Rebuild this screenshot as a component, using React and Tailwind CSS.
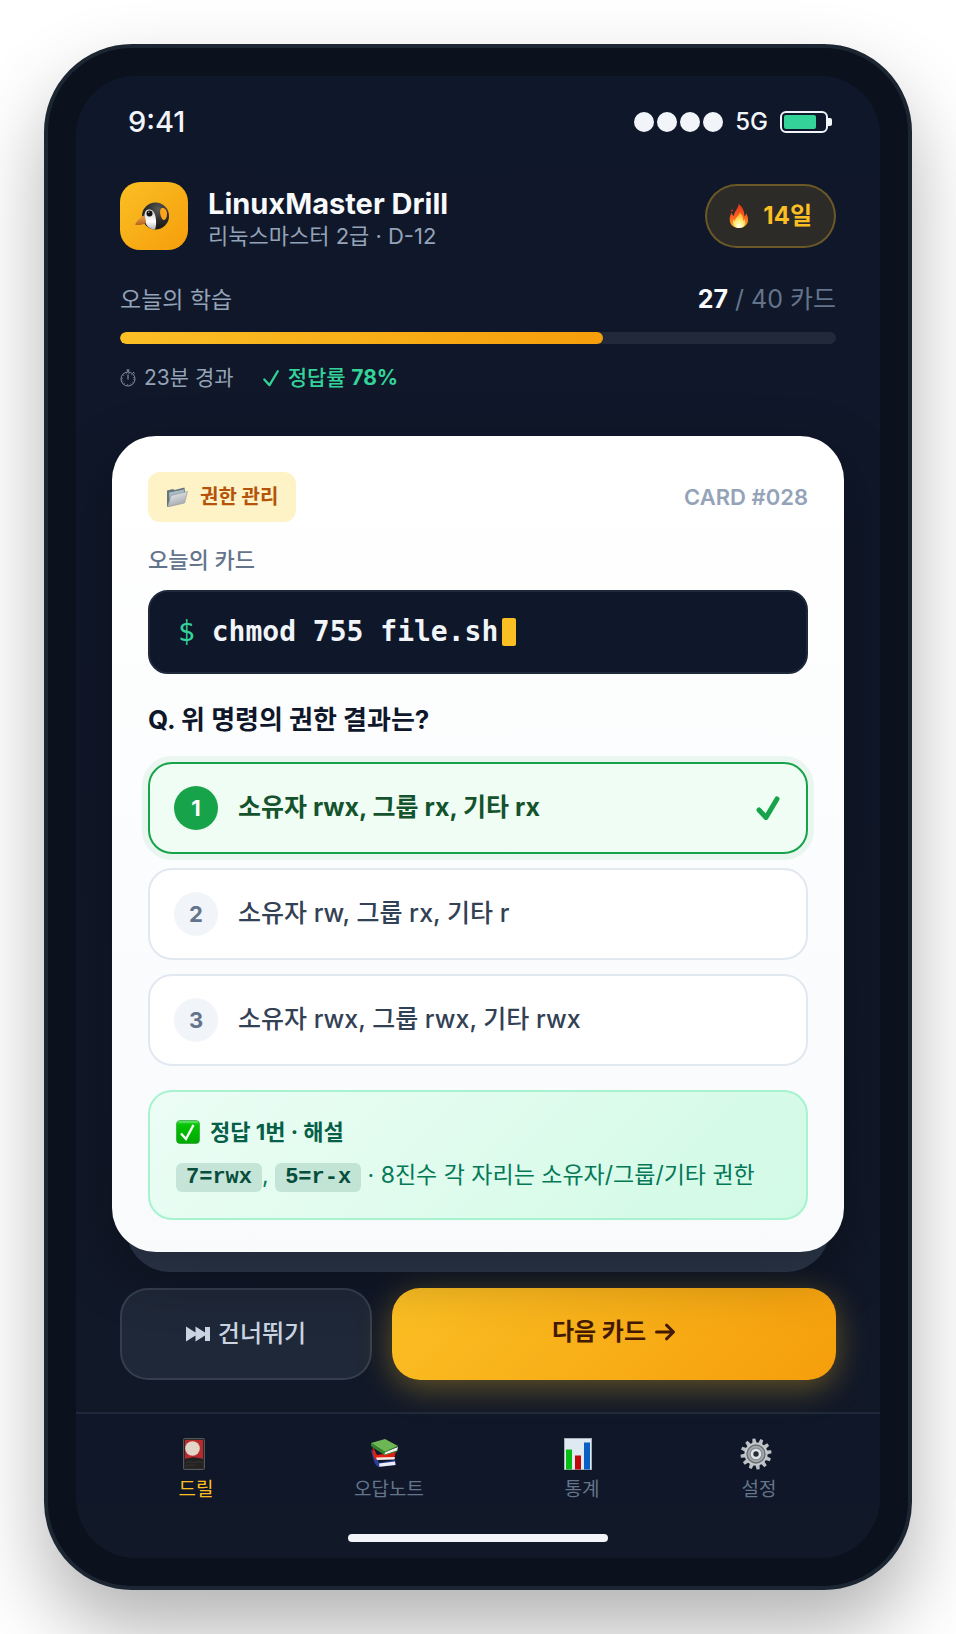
import { useState } from 'react'
import clsx from 'clsx'

const options = [
	{ id: 1, text: '소유자 rwx, 그룹 rx, 기타 rx' },
	{ id: 2, text: '소유자 rw, 그룹 rx, 기타 r' },
	{ id: 3, text: '소유자 rwx, 그룹 rwx, 기타 rwx' }
]

const correctId = 1

const PenguinIcon = () => (
	<svg viewBox="0 0 36 30" className="mr-1 h-[30px] w-9" aria-hidden="true">
		<defs>
			<radialGradient id="penguinHead" cx="0.6" cy="0.25" r="0.8">
				<stop offset="0" stopColor="#5c5b58" />
				<stop offset="0.5" stopColor="#2f2e2c" />
				<stop offset="1" stopColor="#151515" />
			</radialGradient>
			<linearGradient id="penguinFace" x1="0" y1="0" x2="0" y2="1">
				<stop offset="0" stopColor="#c9c9c9" />
				<stop offset="0.6" stopColor="#ffffff" />
				<stop offset="1" stopColor="#b5b5b5" />
			</linearGradient>
			<linearGradient id="penguinBeak" x1="0" y1="0" x2="0" y2="1">
				<stop offset="0" stopColor="#f0a24a" />
				<stop offset="1" stopColor="#b5651d" />
			</linearGradient>
		</defs>
		<circle cx="21.5" cy="15" r="13.5" fill="url(#penguinHead)" />
		<path d="M10.500 17C10 11 12 8.500 15 8.500s5.500 2 6.500 7 .8 9.500-.500 13C14.500 28 11 24 10.500 17z" fill="url(#penguinFace)" />
		<path d="M27 7.500c3.500-1.500 6 1.500 6 5.500s-1.500 6-3.500 6-5-9-2.500-11.500z" fill="#fba31c" />
		<path d="M9.500 14.500c-3 2-7 5.500-8.500 9 3 1.500 8 0 11-1.500 0-3-.5-6-2.500-7.500z" fill="url(#penguinBeak)" />
		<circle cx="15.500" cy="12.500" r="3.800" fill="#ddd" />
		<circle cx="15.500" cy="12.500" r="3" fill="#111" />
		<circle cx="14.700" cy="11.300" r="0.800" fill="#999" />
	</svg>
)

const FireIcon = () => (
	<svg viewBox="0 0 20 24" className="h-6 w-5" aria-hidden="true">
		<defs>
			<linearGradient id="fireOuter" x1="0" y1="0" x2="0" y2="1">
				<stop offset="0" stopColor="#e8321a" />
				<stop offset="0.6" stopColor="#fb6a1e" />
				<stop offset="1" stopColor="#ffb52b" />
			</linearGradient>
			<radialGradient id="fireInner" cx="0.5" cy="0.9" r="0.8">
				<stop offset="0" stopColor="#ffffff" />
				<stop offset="0.45" stopColor="#fff07a" />
				<stop offset="1" stopColor="#ffb02e" />
			</radialGradient>
		</defs>
		<path
			d="M9.500 0c.3 3-2 5-3.500 8C5 10 5.200 11 4.800 12 3.500 11 3 10 2.800 8.500 1.200 11 .4 13.500.8 17 1.400 21.500 5.500 24 10 24s8.500-2.800 9-7c.4-3.200-.8-6-2-8-.1 1.700-.6 2.800-1.500 3.500C15.300 7 13.500 2.500 9.500 0z"
			fill="url(#fireOuter)"
		/>
		<circle cx="3" cy="6.500" r="0.900" fill="#e8321a" />
		<path
			d="M10.500 8.500c.3 3-4.200 5-4.700 8.500-.4-.6-.8-1.200-1-2-1.800 3.600-.7 9 5.200 9s7.300-5 5.500-9c-.4 1-.8 1.400-1.300 1.800.1-3.800-1.200-6.700-3.700-8.300z"
			fill="url(#fireInner)"
		/>
	</svg>
)

const StopwatchIcon = () => (
	<svg viewBox="0 0 16 18" className="h-[18px] w-4" fill="none" stroke="currentColor" aria-hidden="true">
		<circle cx="8" cy="10" r="7" strokeWidth="0.900" />
		<circle cx="8" cy="10" r="5.500" strokeWidth="1" strokeDasharray="0.700 2.180" />
		<path d="M8 5.500v5M6.500 1h3M8 1v2M13 3l1.500 1.500" strokeWidth="1" />
	</svg>
)

const CheckIcon = ({ className, strokeWidth }) => (
	<svg
		viewBox="0 0 24 24"
		className={className}
		fill="none"
		stroke="currentColor"
		strokeWidth={strokeWidth}
		strokeLinecap="round"
		strokeLinejoin="round"
		aria-hidden="true"
	>
		<path d="M3 14l7 7.500L21 3" />
	</svg>
)

const FolderIcon = () => (
	<svg viewBox="0 0 22 20" className="h-5 w-[22px]" aria-hidden="true">
		<defs>
			<linearGradient id="folderFront" x1="0" y1="0" x2="0.400" y2="1">
				<stop offset="0" stopColor="#f0f1f2" />
				<stop offset="1" stopColor="#a3a9af" />
			</linearGradient>
		</defs>
		<path d="M1 3.500L7 2l1.500 1L18.500.5l.5 5L4 19 1 20z" fill="#66747c" />
		<path d="M3 5.500l15-3 .3 3.500L3.500 13z" fill="#a9bcc4" />
		<path d="M5 8.500L21.500 4.500 18.500 16 1.500 20z" fill="url(#folderFront)" stroke="#8b949a" strokeWidth="0.600" />
	</svg>
)

const CheckBoxEmoji = () => (
	<svg viewBox="0 0 24 24" className="size-6" aria-hidden="true">
		<defs>
			<linearGradient id="checkBox" x1="0" y1="0" x2="0" y2="1">
				<stop offset="0" stopColor="#3ed648" />
				<stop offset="0.200" stopColor="#04c404" />
				<stop offset="1" stopColor="#00a800" />
			</linearGradient>
		</defs>
		<rect x="0.500" y="0.500" width="23" height="23" rx="3.500" fill="url(#checkBox)" stroke="#1f9a2a" strokeWidth="0.600" />
		<path d="M2.500 2h19" stroke="#8df08d" strokeWidth="0.800" strokeLinecap="round" />
		<path d="M5 13.500l5 5.500L17.500 5" fill="none" stroke="#fff" strokeWidth="2.400" />
	</svg>
)

const SkipIcon = () => (
	<svg viewBox="0 0 24 16" className="h-4 w-6" fill="currentColor" aria-hidden="true">
		<path d="M0 0.500l9.500 6V0.500l9.500 6V1h5v14h-5V9.500l-9.500 6v-6L0 15.500z" />
	</svg>
)

const ArrowIcon = () => (
	<svg
		viewBox="0 0 22 18"
		className="h-[18px] w-[22px]"
		fill="none"
		stroke="currentColor"
		strokeWidth="3"
		strokeLinecap="round"
		strokeLinejoin="round"
		aria-hidden="true"
	>
		<path d="M2.500 9H19M12.500 2.200L19.500 9l-7 6.800" />
	</svg>
)

const HanafudaIcon = () => (
	<svg viewBox="-4 0 32 32" className="mr-1 size-8" aria-hidden="true">
		<rect x="1.500" y="0.500" width="21" height="31" rx="1" fill="#2b2b2b" stroke="#55565a" />
		<path d="M3 2h18v19c-6-2-12-2-18 0z" fill="#b92a2c" />
		<path d="M3 21c6-2 12-2 18 0v9H3z" fill="#242322" />
		<path d="M4 25c4-3 7 1 10-1 3-1 5 0 7 1M4 28c4-2 6 0 9-1" fill="none" stroke="#3b3936" strokeWidth="0.800" />
		<circle cx="10.500" cy="10.500" r="7.300" fill="#e2d6c8" />
	</svg>
)

const BooksIcon = () => (
	<svg viewBox="1 0 32 32" className="mr-1 size-8" aria-hidden="true">
		<path d="M1 12l4 2 4 11 16-3 1 5-17 2c-4-1-5-5-8-17z" fill="#27409b" />
		<path d="M9 25.500l16-2 .5 3.500-16 1.800z" fill="#ececf2" />
		<path d="M3 9l4 8 19-3-2 6-18 2c-3-3-4-8-3-13z" fill="#e01f12" />
		<path d="M6 19.500l19-.5-.5 2.500L7 22z" fill="#f5e9e6" />
		<path d="M1 5L15 1l13 7-13 6z" fill="#6cb656" />
		<path d="M1 5l14 9-.5 3L2 9c-1.200-1-1.500-3-1-4z" fill="#35832c" />
		<path d="M15 14l13-5-1 4-12.500 4z" fill="#f4f4f4" />
		<path d="M28 8l-13 6.200M28 12.500L14.500 17" stroke="#35832c" strokeWidth="0.900" fill="none" />
	</svg>
)

const ChartIcon = () => (
	<svg viewBox="0 0 32 32" className="mr-1 size-8" aria-hidden="true">
		<rect x="0.500" y="0.500" width="27" height="31" fill="#dfe9f1" stroke="#a9b1b8" />
		<rect x="2" y="11.500" width="6" height="20" fill="#07bd15" />
		<rect x="11" y="17.500" width="6" height="14" fill="#c00808" />
		<rect x="20" y="4.500" width="6" height="27" fill="#0a5fc4" />
	</svg>
)

const teeth = [0, 30, 60, 90, 120, 150, 180, 210, 240, 270, 300, 330]

const GearIcon = () => (
	<svg viewBox="0 0 32 32" className="mr-1.5 size-8" aria-hidden="true">
		{teeth.map((angle) => (
			<path key={angle} d="M13.800 6l.7-5.500h3l.7 5.500z" fill="#bcc0c4" transform={`rotate(${angle - 8} 16 16)`} />
		))}
		<circle cx="16" cy="16" r="11.500" fill="#c6cacd" />
		<circle cx="16" cy="16" r="9" fill="#a3a9ad" stroke="#687074" strokeWidth="1.400" />
		<circle cx="16" cy="16" r="6.500" fill="#858d92" />
		<circle cx="16" cy="16" r="4" fill="#252c33" stroke="#dfe4e8" strokeWidth="2.600" />
	</svg>
)

const navItems = [
	{ label: '드릴', icon: HanafudaIcon },
	{ label: '오답노트', icon: BooksIcon },
	{ label: '통계', icon: ChartIcon },
	{ label: '설정', icon: GearIcon }
]

const StatusBar = () => (
	<div className="flex h-23 items-center justify-between pr-12 pl-13 text-[#f1f5f9]">
		<span className="text-[29px] leading-8 font-medium">9:41</span>
		<div className="flex items-center">
			<div className="flex gap-[3px]">
				<span className="size-5 rounded-full bg-[#f1f5f9]" />
				<span className="size-5 rounded-full bg-[#f1f5f9]" />
				<span className="size-5 rounded-full bg-[#f1f5f9]" />
				<span className="size-5 rounded-full bg-[#f1f5f9]" />
			</div>
			<span className="mx-3 text-[24px] leading-8 font-medium">5G</span>
			<div className="h-[22px] w-12 rounded-md border-2 border-[#f1f5f9] p-0.5">
				<div className="h-full w-4/5 rounded-xs bg-[#34d399]" />
			</div>
			<div className="h-2 w-1 rounded-r-xs bg-[#f1f5f9]" />
		</div>
	</div>
)

const Progress = ({ done, total }) => (
	<section className="mt-8 px-11">
		<div className="flex h-9 items-center justify-between">
			<span className="text-[23px] text-[#94a3b8]">오늘의 학습</span>
			<span className="text-[25px] text-[#64748b]">
				<b className="font-bold text-[#f8fafc]">{done}</b> / {total} 카드
			</span>
		</div>
		<div className="mt-3.5 h-3 overflow-hidden rounded-md bg-white/8">
			<div
				className="h-full rounded-md bg-[linear-gradient(90deg,#fbbf24,#f59e0b)]"
				style={{ width: `${(done / total) * 100}%` }}
			/>
		</div>
		<div className="mt-4 flex h-9 items-center gap-7 text-[21px]">
			<span className="flex items-center gap-2 text-[#94a3b8]">
				<StopwatchIcon />
				23분 경과
			</span>
			<span className="flex items-center gap-2 text-[#34d399]">
				<CheckIcon className="size-[18px]" strokeWidth={3} />
				<span className="font-medium">
					정답률 <b className="font-bold">78%</b>
				</span>
			</span>
		</div>
	</section>
)

const Option = ({ option, selected, onSelect }) => (
	<label
		className={clsx(
			'relative flex h-23 cursor-pointer items-center gap-5 rounded-3xl border-2 px-6 text-[25px]',
			selected
				? 'border-[#16a34a] bg-[#f0fdf4] font-bold text-[#14532d] ring-6 ring-[#16a34a]/8'
				: 'border-[#e2e8f0] bg-white font-medium text-[#334155]'
		)}
	>
		<input type="radio" name="answer" className="sr-only" checked={selected} onChange={onSelect} />
		<span
			className={clsx(
				'flex size-11 items-center justify-center rounded-full text-[22px] font-bold',
				selected ? 'bg-[#16a34a] text-white' : 'bg-[#f1f5f9] text-[#64748b]'
			)}
		>
			{option.id}
		</span>
		<span className="grow">{option.text}</span>
		{selected && <CheckIcon className="mr-0.5 size-6 text-[#16a34a]" strokeWidth={5} />}
	</label>
)

const Code = ({ children }) => (
	<code className="rounded-md bg-[#065f46]/15 px-2.5 py-0.5 font-['Liberation_Mono',monospace] text-[22px] leading-none font-bold text-[#064e3b]">
		{children}
	</code>
)

const App = () => {
	const [selectedId, setSelectedId] = useState(correctId)
	const [activeTab, setActiveTab] = useState(0)

	return (
		<div className="min-h-screen overflow-hidden bg-white p-11 font-[Inter,'Noto_Sans_CJK_KR',sans-serif]">
			<div className="rounded-[88px] border-4 border-[#1c2633] bg-[#0b121e] p-7 shadow-[0_40px_80px_rgba(0,0,0,0.3)]">
				<div className="overflow-hidden rounded-[60px] bg-[linear-gradient(180deg,#0f172a,#111827)]">
					<StatusBar />
					<header className="mt-3.5 flex items-center px-11">
						<div className="flex size-17 items-center justify-center rounded-[20px] bg-[linear-gradient(135deg,#fbbf24,#f59e0b)]">
							<PenguinIcon />
						</div>
						<div className="ml-5 grow pt-1">
							<h1 className="text-[29px] leading-9 font-bold text-[#f8fafc]">LinuxMaster Drill</h1>
							<p className="text-[22px] leading-7 text-[#94a3b8]">리눅스마스터 2급 · D-12</p>
						</div>
						<div className="flex h-16 items-center gap-3.5 rounded-full border-2 border-[#fbbf24]/30 bg-[#fbbf24]/12 px-[22px] text-[24px] font-bold text-[#fbbf24]">
							<FireIcon />
							14일
						</div>
					</header>
					<Progress done={27} total={40} />

					<main className="relative z-10 mx-9 mt-10">
						<div className="absolute inset-x-3.5 top-5 -bottom-5 rounded-[44px] bg-[#2c384b]" />
						<div className="relative rounded-[44px] bg-[linear-gradient(180deg,#ffffff,#f8fafc)] px-9 pt-9 pb-8 shadow-[0_20px_60px_rgba(0,0,0,0.3)]">
							<div className="flex items-center justify-between">
								<span className="flex h-[50px] items-center gap-3 rounded-xl bg-[#fef3c7] px-[18px] text-[20px] font-bold text-[#b45309]">
									<FolderIcon />
									권한 관리
								</span>
								<span className="text-[22px] font-semibold text-[#94a3b8]">CARD #028</span>
							</div>
							<p className="mt-6 text-[22px] leading-7 font-medium text-[#64748b]">오늘의 카드</p>
							<div className="mt-4 flex h-21 items-center rounded-[20px] border-2 border-[#1e293b] bg-[#0f172a] px-7 font-['DejaVu_Sans_Mono',monospace] text-[28px] font-bold whitespace-pre text-[#f1f5f9]">
								<span className="font-normal text-[#34d399]">$ </span>
								<code className="font-['DejaVu_Sans_Mono',monospace]">chmod 755 file.sh</code>
								<span className="ml-1 h-7 w-3.5 rounded-xs bg-[#fbbf24]" />
							</div>
							<h2 className="mt-7 text-[26px] leading-9 font-bold text-[#0f172a]">Q. 위 명령의 권한 결과는?</h2>
							<div className="mt-6 flex flex-col gap-3.5">
								{options.map((option) => (
									<Option
										key={option.id}
										option={option}
										selected={option.id === selectedId}
										onSelect={() => setSelectedId(option.id)}
									/>
								))}
							</div>
							<div className="mt-6 rounded-3xl border-2 border-[#a7f3d0] bg-[linear-gradient(135deg,#ecfdf5,#d1fae5)] px-6.5 py-6.5">
								<div className="flex items-center gap-2.5 text-[22px] leading-7 font-bold text-[#065f46]">
									<CheckBoxEmoji />
									정답 1번 · 해설
								</div>
								<p className="mt-3 text-[23px] leading-[34px] text-[#047857]">
									<Code>7=rwx</Code>, <Code>5=r-x</Code> · 8진수 각 자리는 소유자/그룹/기타 권한
								</p>
							</div>
						</div>
					</main>

					<div className="mt-9 grid grid-cols-[252fr_444fr] gap-5 px-11">
						<button
							type="button"
							className="flex h-23 items-center justify-center gap-2 rounded-[28px] border-2 border-white/10 bg-[#1f2838] text-[24px] font-medium text-[#cbd5e1]"
						>
							<SkipIcon />
							건너뛰기
						</button>
						<button
							type="button"
							className="flex h-23 items-center justify-center gap-2 rounded-[28px] bg-[linear-gradient(135deg,#fbbf24,#f59e0b)] pb-1 text-[24px] font-bold text-[#451a03] shadow-[0_8px_32px_rgba(251,191,36,0.35)]"
						>
							다음 카드
							<ArrowIcon />
						</button>
					</div>

					<nav className="mt-8 flex justify-around border-t-2 border-[#1e293b] bg-[#0f172a]/60 px-8 pt-6">
						{navItems.map((item, index) => (
							<button
								key={item.label}
								type="button"
								className={clsx(
									'flex flex-col items-center gap-1.5 text-[19px] leading-7',
									index === activeTab ? 'text-[#fbbf24]' : 'text-[#64748b]'
								)}
								onClick={() => setActiveTab(index)}
							>
								<item.icon />
								{item.label}
							</button>
						))}
					</nav>
					<div className="flex justify-center pt-[30px] pb-4">
						<div className="h-2 w-65 rounded-full bg-[#f1f5f9]" />
					</div>
				</div>
			</div>
		</div>
	)
}

export default App
